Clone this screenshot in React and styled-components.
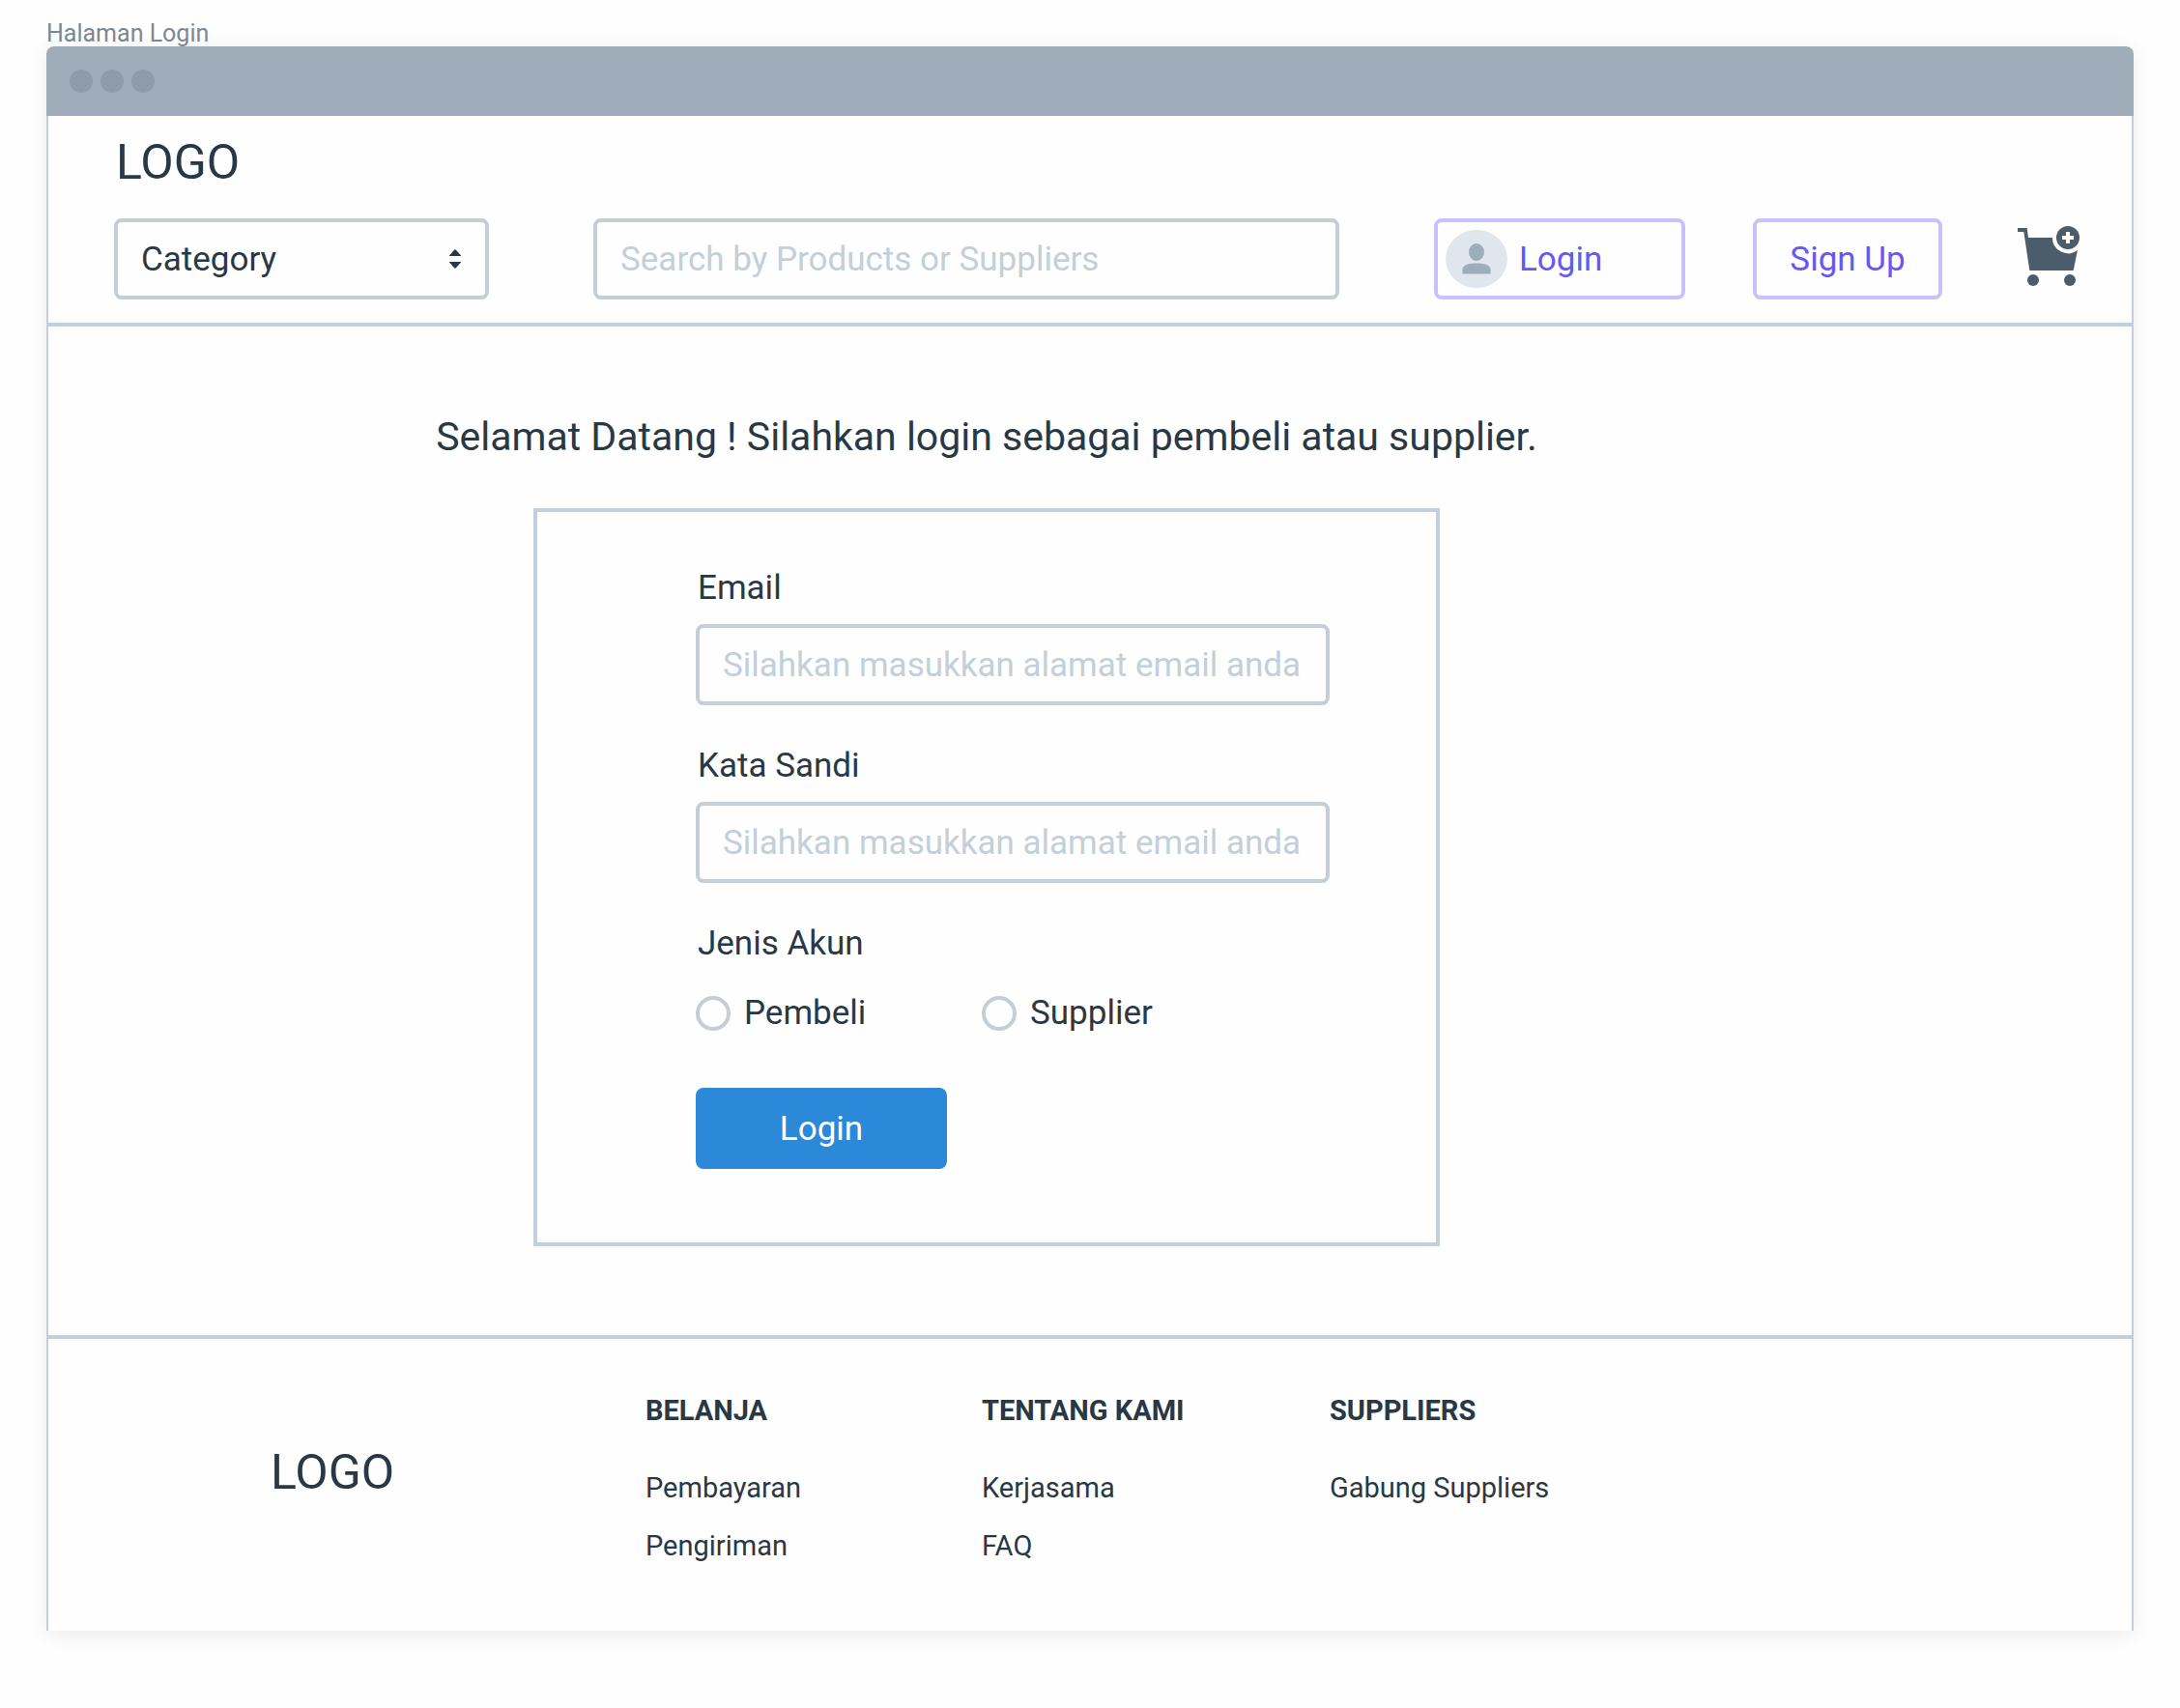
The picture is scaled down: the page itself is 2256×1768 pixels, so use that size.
import React from "react";
import styled, { createGlobalStyle } from "styled-components";

const color = {
  page: "#fefefe",
  ink: "#293845",
  muted: "#788896",
  line: "#c3cfd9",
  field: "#c5cdd5",
  bar: "#9eadb9",
  dot: "#8e9cab",
  purple: "#6558f5",
  purpleLine: "#c8c1fc",
  blue: "#2c88d9",
  avatar: "#dfe6ed",
  person: "#9eadba",
  cart: "#4b5c6b",
};

const GlobalStyle = createGlobalStyle`
  *, *::before, *::after { box-sizing: border-box; }
  body { margin: 0; background: ${color.page}; }
  body, button, input, select {
    font-family: Roboto, "Liberation Sans", sans-serif;
    font-size: 35px;
    line-height: 46px;
    color: ${color.ink};
  }
`;

const Page = styled.div`
  padding: 22px 48px 80px;
`;

const PageTitle = styled.div`
  font-size: 25px;
  line-height: 26px;
  color: ${color.muted};
`;

const Frame = styled.div`
  border-radius: 8px 8px 0 0;
  box-shadow: 0 4px 20px rgba(0, 0, 0, 0.08);
`;

const TitleBar = styled.div`
  display: flex;
  align-items: center;
  gap: 8px;
  height: 72px;
  padding: 0 24px;
  border-radius: 8px 8px 0 0;
  background: ${color.bar};
`;

const Dot = styled.span`
  width: 24px;
  height: 24px;
  border-radius: 50%;
  background: ${color.dot};
`;

const Body = styled.div`
  border: solid ${color.line};
  border-width: 0 2px;
  background: ${color.page};
`;

const Header = styled.header`
  display: flex;
  flex-direction: column;
  gap: 28px;
  padding: 18px 54px 24px 68px;
  border-bottom: 4px solid ${color.line};
`;

const Logo = styled.div`
  padding-left: 2px;
  font-size: 50px;
  line-height: 60px;
`;

const Toolbar = styled.div`
  display: flex;
  align-items: center;
`;

const SelectWrap = styled.div`
  position: relative;
  width: 388px;
  margin-right: 108px;

  svg {
    position: absolute;
    top: 32px;
    right: 29px;
    pointer-events: none;
  }
`;

const Select = styled.select`
  display: block;
  appearance: none;
  width: 100%;
  height: 84px;
  padding: 2px 64px 0 24px;
  border: 4px solid ${color.field};
  border-radius: 8px;
  background: ${color.page};
`;

const Input = styled.input`
  display: block;
  width: 100%;
  height: 84px;
  padding: 0 24px;
  border: 4px solid ${color.field};
  border-radius: 8px;
  background: ${color.page};

  &::placeholder {
    color: ${color.line};
    opacity: 1;
  }
`;

const Search = styled.form`
  flex: 1;
  min-width: 0;
  margin-right: 98px;
`;

const Button = styled.button`
  display: flex;
  align-items: center;
  justify-content: ${(p) => (p.$withAvatar ? "flex-start" : "center")};
  gap: 12px;
  width: ${(p) => p.$width}px;
  height: 84px;
  padding: 0 8px;
  border: 4px solid ${(p) => (p.$primary ? color.blue : color.purpleLine)};
  border-radius: 8px;
  background: ${(p) => (p.$primary ? color.blue : color.page)};
  color: ${(p) => (p.$primary ? "#fff" : color.purple)};
  cursor: pointer;
`;

const ButtonText = styled.span`
  padding-top: 2px;
`;

const HeaderActions = styled.div`
  display: flex;
  gap: 70px;
  margin-right: 78px;
`;

const CartButton = styled.button`
  display: flex;
  align-self: flex-start;
  padding: 8px 0 0;
  border: 0;
  background: none;
  cursor: pointer;
`;

const Main = styled.main`
  display: flex;
  flex-direction: column;
  align-items: center;
  gap: 46px;
  padding: 86px 214px 92px 0;
`;

const Welcome = styled.h1`
  margin: 0;
  font-size: 41px;
  line-height: 56px;
  font-weight: 400;
`;

const LoginForm = styled.form`
  display: flex;
  flex-direction: column;
  gap: 40px;
  width: 100%;
  max-width: 938px;
  padding: 56px 110px 76px 164px;
  border: 4px solid ${color.line};
`;

const Field = styled.div`
  display: flex;
  flex-direction: column;
  gap: 14px;
`;

const Label = styled.label`
  padding-left: 2px;
`;

const AccountType = styled.fieldset`
  margin: 0 0 14px;
  padding: 0;
  border: 0;
`;

const Legend = styled.legend`
  margin-bottom: 26px;
  padding: 0 0 0 2px;
`;

const Choices = styled.div`
  display: grid;
  grid-template-columns: 296px 1fr;
`;

const Choice = styled.label`
  display: flex;
  align-items: center;
  gap: 14px;
`;

const Radio = styled.input`
  appearance: none;
  width: 36px;
  height: 36px;
  margin: 0;
  border: 4px solid ${color.field};
  border-radius: 50%;

  &:checked {
    border-width: 10px;
    border-color: ${color.blue};
  }
`;

const Footer = styled.footer`
  display: grid;
  grid-template-columns: 388fr 348fr 360fr 830fr;
  align-items: start;
  padding: 54px 0 68px 230px;
  border-top: 4px solid ${color.line};
`;

const FooterLogo = styled(Logo)`
  padding: 54px 0 0;
`;

const FooterTitle = styled.h2`
  margin: 0 0 40px;
  font-size: 29px;
  line-height: 40px;
  font-weight: 700;
`;

const LinkList = styled.ul`
  display: flex;
  flex-direction: column;
  gap: 20px;
  margin: 0;
  padding: 0;
  list-style: none;
  font-size: 29px;
  line-height: 40px;
`;

const FooterLink = styled.a`
  color: inherit;
  text-decoration: none;
`;

const footerColumns = [
  { title: "BELANJA", links: ["Pembayaran", "Pengiriman"] },
  { title: "TENTANG KAMI", links: ["Kerjasama", "FAQ"] },
  { title: "SUPPLIERS", links: ["Gabung Suppliers"] },
];

const Arrows = () => (
  <svg width="12" height="20" viewBox="0 0 12 20" fill={color.ink} aria-hidden="true">
    <path d="M0 6.4 5.3.5Q6 0 6.7.5L12 6.4V7H0zM0 13h12v.6L6.7 19.5Q6 20 5.3 19.5L0 13.6z" />
  </svg>
);

const Avatar = () => (
  <svg width="64" height="60" viewBox="0 0 64 60" aria-hidden="true">
    <ellipse cx="32" cy="30" rx="32" ry="30" fill={color.avatar} />
    <ellipse cx="32" cy="23" rx="8" ry="9" fill={color.person} />
    <path d="M17.500 45.500V41C17.500 36.500 24 34.500 32 34.500S46.500 36.500 46.500 41V45.500z" fill={color.person} />
  </svg>
);

const Cart = () => (
  <svg width="64" height="62" viewBox="84 72 192 186" aria-hidden="true">
    <path d="M84 78H113L117 108H192A48 48 0 0 0 270 146L257 210H121L103 90H84z" fill={color.cart} />
    <circle cx="132" cy="240" r="18" fill={color.cart} />
    <circle cx="246" cy="240" r="18" fill={color.cart} />
    <circle cx="240" cy="108" r="36" fill={color.cart} />
    <path d="M234 90h12v12h12v12h-12v12h-12v-12h-12v-12h12z" fill={color.page} />
  </svg>
);

export default function App() {
  return (
    <Page>
      <GlobalStyle />
      <PageTitle>Halaman Login</PageTitle>
      <Frame>
        <TitleBar>
          <Dot />
          <Dot />
          <Dot />
        </TitleBar>
        <Body>
          <Header>
            <Logo>LOGO</Logo>
            <Toolbar>
              <SelectWrap>
                <Select aria-label="Category">
                  <option>Category</option>
                </Select>
                <Arrows />
              </SelectWrap>
              <Search role="search" onSubmit={(e) => e.preventDefault()}>
                <Input
                  type="search"
                  aria-label="Search by Products or Suppliers"
                  placeholder="Search by Products or Suppliers"
                />
              </Search>
              <HeaderActions>
                <Button type="button" $width={260} $withAvatar>
                  <Avatar />
                  <ButtonText>Login</ButtonText>
                </Button>
                <Button type="button" $width={196}>
                  <ButtonText>Sign Up</ButtonText>
                </Button>
              </HeaderActions>
              <CartButton type="button" aria-label="Cart">
                <Cart />
              </CartButton>
            </Toolbar>
          </Header>

          <Main>
            <Welcome>Selamat Datang ! Silahkan login sebagai pembeli atau supplier.</Welcome>
            <LoginForm onSubmit={(e) => e.preventDefault()}>
              <Field>
                <Label htmlFor="email">Email</Label>
                <Input id="email" type="email" placeholder="Silahkan masukkan alamat email anda" />
              </Field>
              <Field>
                <Label htmlFor="password">Kata Sandi</Label>
                <Input id="password" type="password" placeholder="Silahkan masukkan alamat email anda" />
              </Field>
              <AccountType>
                <Legend>Jenis Akun</Legend>
                <Choices>
                  <Choice>
                    <Radio type="radio" name="account" value="pembeli" />
                    Pembeli
                  </Choice>
                  <Choice>
                    <Radio type="radio" name="account" value="supplier" />
                    Supplier
                  </Choice>
                </Choices>
              </AccountType>
              <Button type="submit" $width={260} $primary>
                <ButtonText>Login</ButtonText>
              </Button>
            </LoginForm>
          </Main>

          <Footer>
            <FooterLogo>LOGO</FooterLogo>
            {footerColumns.map((column) => (
              <nav key={column.title} aria-label={column.title}>
                <FooterTitle>{column.title}</FooterTitle>
                <LinkList>
                  {column.links.map((link) => (
                    <li key={link}>
                      <FooterLink href="#">{link}</FooterLink>
                    </li>
                  ))}
                </LinkList>
              </nav>
            ))}
          </Footer>
        </Body>
      </Frame>
    </Page>
  );
}
